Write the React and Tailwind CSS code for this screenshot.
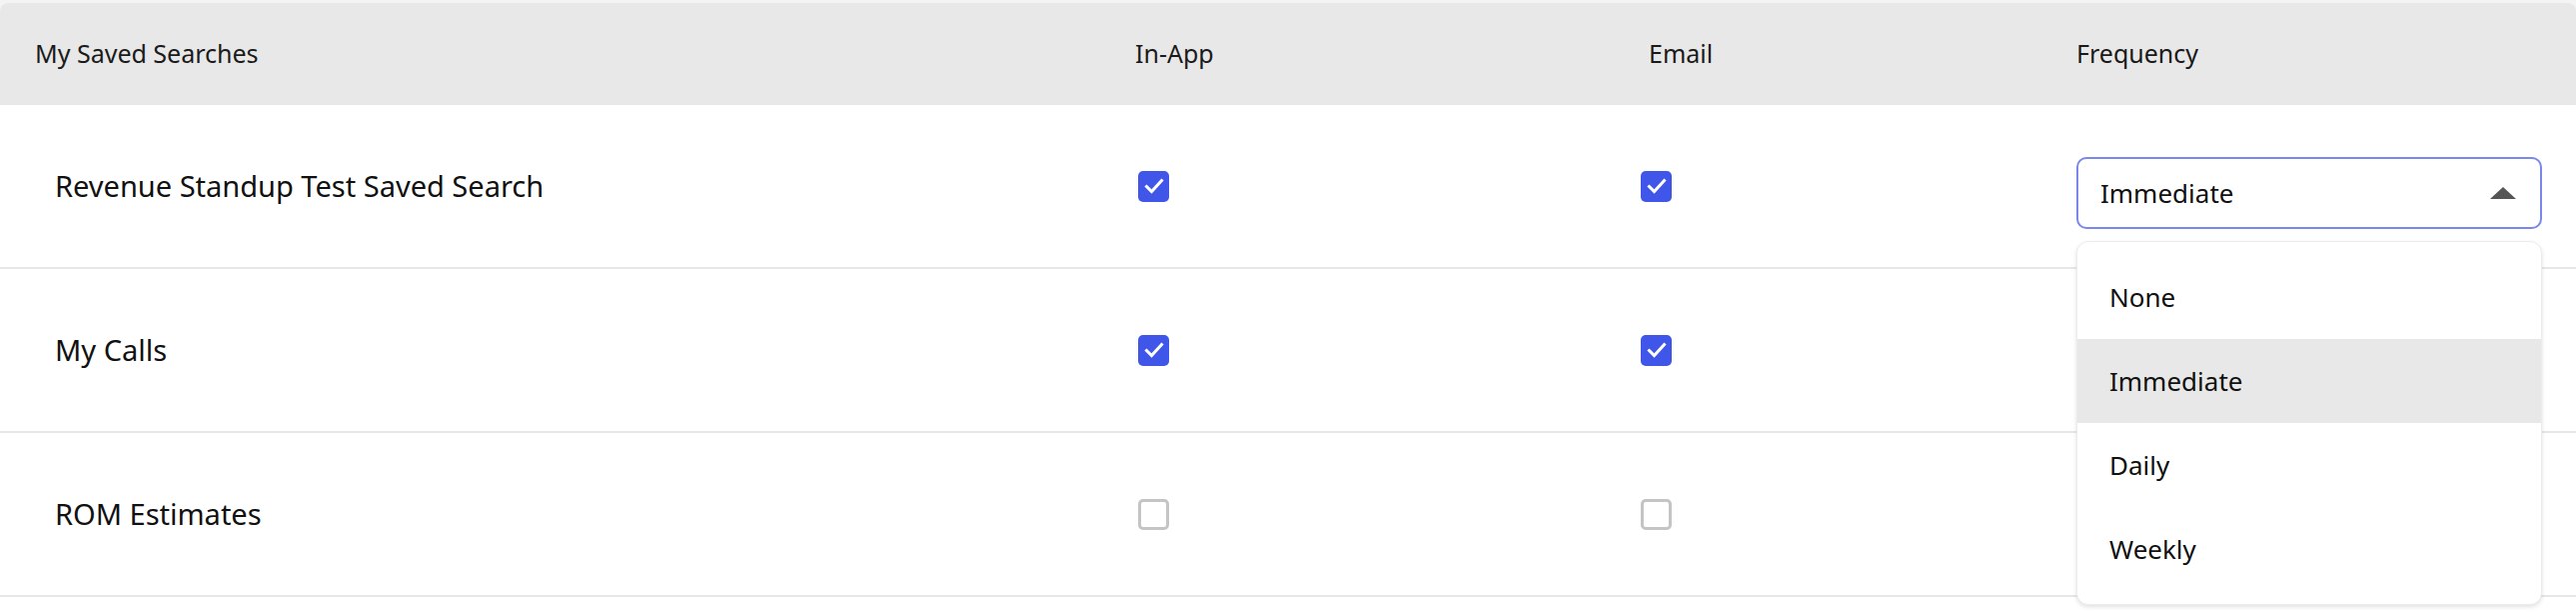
import React, { useState } from 'react'

const rows = [
  { name: 'Revenue Standup Test Saved Search', inApp: true, email: true, open: true },
  { name: 'My Calls', inApp: true, email: true },
  { name: 'ROM Estimates', inApp: false, email: false },
]

const options = ['None', 'Immediate', 'Daily', 'Weekly']

const Checkbox = ({ checked, className }) => (
  checked ? (
    <div className={`w-[31px] h-[31px] rounded-[5px] bg-[#3f56e8] flex items-center justify-center ${className}`}>
      <svg width="24" height="24" viewBox="0 0 24 24" fill="none">
        <path d="M4.5 12.5l5 5 10-11" stroke="white" strokeWidth="3" strokeLinecap="square" />
      </svg>
    </div>
  ) : (
    <div className={`w-[31px] h-[31px] rounded-[5px] border-[3px] border-[#c4c4c4] bg-white ${className}`} />
  )
)

const FrequencySelect = ({ open }) => {
  const [value] = useState('Immediate')
  return (
    <div className="relative w-[466px] mt-[14px]">
      <div className={`h-[72px] rounded-[10px] border-2 ${open ? 'border-[#7b87ea]' : 'border-[#c4c4c4]'} bg-white flex items-center justify-between pl-[22px] pr-[24px] text-[26px] text-[#111]`}>
        <span>{value}</span>
        <svg width="26" height="12" viewBox="0 0 26 12">
          <path d="M0 12L13 0L26 12Z" fill="#555" />
        </svg>
      </div>
      {open && (
        <div className="absolute left-0 top-[84px] w-full z-10 bg-white rounded-[12px] border border-[#ececec] shadow-[0_2px_4px_rgba(0,0,0,0.12)] py-[13px]">
          {options.map((opt) => (
            <div key={opt} className={`h-[84px] flex items-center pl-[32px] text-[26px] text-[#111] ${opt === value ? 'bg-[#e8e8e8]' : ''}`}>
              {opt}
            </div>
          ))}
        </div>
      )}
    </div>
  )
}

export default function App() {
  return (
    <div className="w-[2578px] h-[612px] bg-[#f4f4f4] pt-[3px] overflow-hidden" style={{ fontFamily: '"Noto Sans", "Open Sans", sans-serif' }}>
      <div className="h-full bg-white rounded-t-[8px]">
        {/* Header */}
        <div className="grid grid-cols-[1136px_514px_428px_1fr] h-[102px] items-center bg-[#e8e8e8] rounded-t-[8px] text-[25px] text-[#1a1a1a]">
          <div className="pl-[35px]">My Saved Searches</div>
          <div>In-App</div>
          <div>Email</div>
          <div>Frequency</div>
        </div>

        {/* Rows */}
        {rows.map((row) => (
          <div key={row.name} className="grid grid-cols-[1136px_514px_428px_1fr] h-[164px] items-center border-b-2 border-[#e6e6e6] text-[29px] text-[#111]">
            <div className="pl-[55px]">{row.name}</div>
            <div><Checkbox checked={row.inApp} className="ml-[3px]" /></div>
            <div><Checkbox checked={row.email} className="-ml-[8px]" /></div>
            <div>{row.open && <FrequencySelect open />}</div>
          </div>
        ))}
      </div>
    </div>
  )
}
